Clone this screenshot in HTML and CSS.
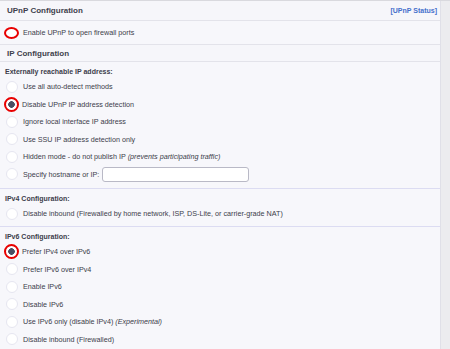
FILE: index.html
```html
<!DOCTYPE html>
<html>
<head>
	<title>Network Configuration</title>
	<meta name="viewport" content="width=device-width, initial-scale=1.0">
	<link rel="stylesheet" href="styles.css">
</head>
<body>
	<div class="page">
		<div class="config">
			<div class="sec-title">
				<span>UPnP Configuration</span>
				<a class="status" href="#">[UPnP Status]</a>
			</div>
			<div class="upnp-row">
				<span class="check on"></span>
				<span>Enable UPnP to open firewall ports</span>
			</div>
			<div class="sec-title"><span>IP Configuration</span></div>

			<div class="block">
				<div class="label">Externally reachable IP address:</div>
				<div class="opt"><span class="radio"></span>Use all auto-detect methods</div>
				<div class="opt"><span class="radio on"></span>Disable UPnP IP address detection</div>
				<div class="opt"><span class="radio"></span>Ignore local interface IP address</div>
				<div class="opt"><span class="radio"></span>Use SSU IP address detection only</div>
				<div class="opt"><span class="radio"></span>Hidden mode - do not publish IP&nbsp;<i>(prevents participating traffic)</i></div>
				<div class="opt"><span class="radio"></span>Specify hostname or IP:<input class="host" type="text"></div>
			</div>

			<div class="block mid">
				<div class="label">IPv4 Configuration:</div>
				<div class="opt"><span class="radio"></span>Disable inbound (Firewalled by home network, ISP, DS-Lite, or carrier-grade NAT)</div>
			</div>

			<div class="block last">
				<div class="label">IPv6 Configuration:</div>
				<div class="opt"><span class="radio on"></span>Prefer IPv4 over IPv6</div>
				<div class="opt"><span class="radio"></span>Prefer IPv6 over IPv4</div>
				<div class="opt"><span class="radio"></span>Enable IPv6</div>
				<div class="opt"><span class="radio"></span>Disable IPv6</div>
				<div class="opt"><span class="radio"></span>Use IPv6 only (disable IPv4)&nbsp;<i>(Experimental)</i></div>
				<div class="opt"><span class="radio"></span>Disable inbound (Firewalled)</div>
			</div>
		</div>
		<div class="strip"></div>
	</div>
</body>
</html>
```

FILE: styles.css
```css
		body, html {
			margin: 0;
			font-family: "Liberation Sans", Arial, sans-serif;
			color: #3c3d4a;
			background-color: #f7f7fb;
			font-size: 7.2px;
		}
		.page {
			display: flex;
			border-top: 1px solid #d9d9de;
			height: 348px;
			overflow: hidden;
		}
		.config {
			width: 440px;
			border-right: 1px solid #e0e0e8;
			background-color: #f7f7fb;
		}
		.strip {
			flex: 1;
			background-color: #ececef;
		}
		.sec-title {
			display: flex;
			justify-content: space-between;
			align-items: center;
			height: 16px;
			padding: 0 3px 0 7px;
			font-size: 8px;
			font-weight: bold;
			color: #3e3f4c;
			background-color: #f6f6fa;
			border-bottom: 1px solid #e3e3ea;
		}
		.sec-title:first-child { height: 19px; }
		.status {
			color: #4670cc;
			font-size: 7px;
			text-decoration: none;
		}
		.upnp-row {
			display: flex;
			align-items: center;
			height: 23px;
			padding-left: 4px;
			border-bottom: 1px solid #e3e3ea;
		}
		.check {
			width: 11px;
			height: 8px;
			border: 2px solid #e80000;
			border-radius: 50%;
			background: #fff;
			margin-right: 4px;
		}
		.block {
			padding: 3px 0 5px;
			border-bottom: 1px solid #dcdcf2;
		}
		.block.mid { padding-bottom: 3.5px; }
		.block.last { border-bottom: none; }
		.label {
			height: 13px;
			line-height: 13px;
			padding-left: 5px;
			font-size: 7px;
			font-weight: bold;
		}
		.opt {
			display: flex;
			align-items: center;
			height: 17.5px;
			padding-left: 6px;
			white-space: nowrap;
		}
		.opt i { font-style: italic; }
		.radio {
			box-sizing: border-box;
			width: 12px;
			height: 12px;
			margin-right: 5px;
			border: 1px solid #e6e6f0;
			border-radius: 50%;
			background: #fff;
		}
		.radio.on {
			width: 15px;
			height: 15px;
			margin: 0 3px 0 -2px;
			border: 2px solid #e80000;
			background: radial-gradient(circle, #4b5064 0, #4b5064 3px, #fff 3.6px);
		}
		.host {
			box-sizing: border-box;
			width: 147px;
			height: 15px;
			margin-left: 3px;
			border: 1px solid #b9b9c6;
			border-radius: 3px;
			background: #fff;
			padding: 0;
		}
```
